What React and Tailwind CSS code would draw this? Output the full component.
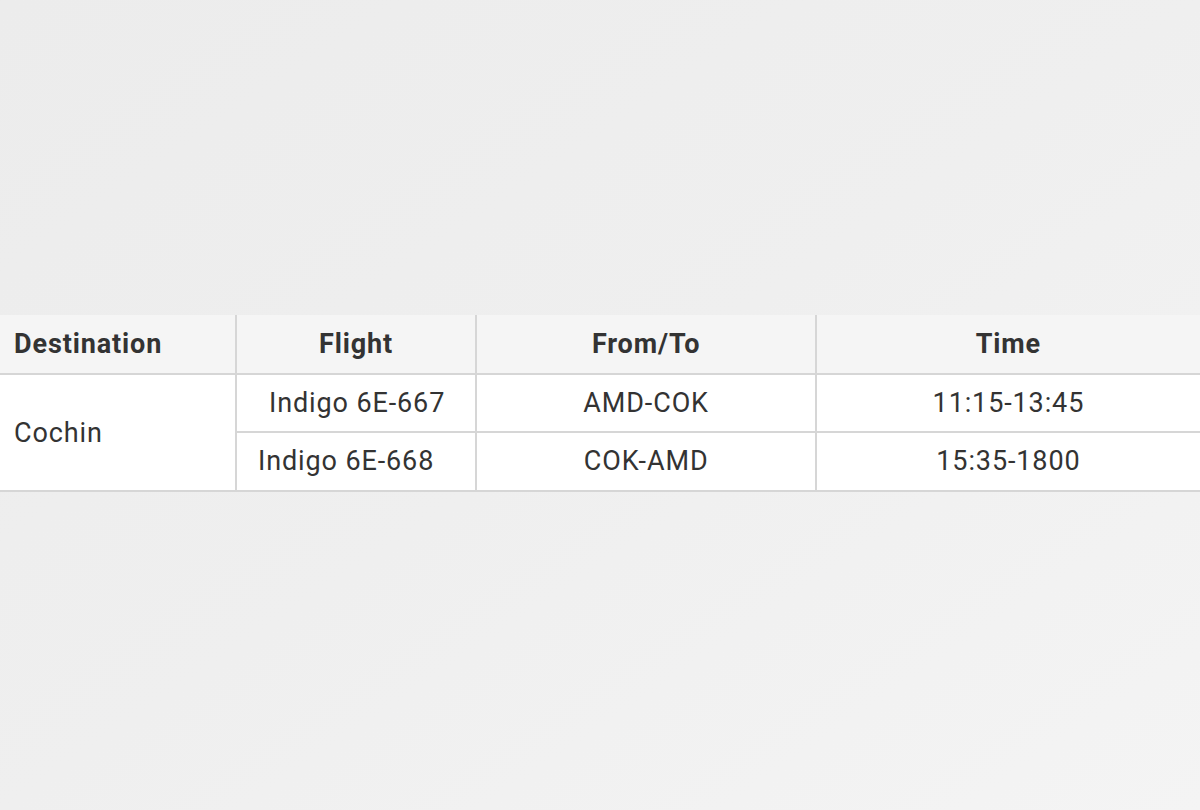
export default function App() {
  const cell = "border-2 border-[#d6d6d6] text-[27px] text-[#333333] leading-none";
  return (
    <div
      className="w-[1200px] h-[810px] overflow-hidden bg-gradient-to-br from-[#ececec] via-[#efefef] to-[#f4f4f4] pt-[315px]"
      style={{ fontFamily: "Roboto, 'Liberation Sans', sans-serif" }}
    >
      <table className="w-[1212px] -ml-[2px] border-collapse tracking-[0.055em]">
        <colgroup>
          <col className="w-[237px]" />
          <col className="w-[241px]" />
          <col className="w-[340px]" />
          <col className="w-[394px]" />
        </colgroup>
        <thead>
          <tr className="bg-[#f5f5f5] h-[59px]">
            <th className={`${cell} border-t-0 font-bold text-left pl-[14px]`}>Destination</th>
            <th className={`${cell} border-t-0 font-bold text-center`}>Flight</th>
            <th className={`${cell} border-t-0 font-bold text-center`}>From/To</th>
            <th className={`${cell} border-t-0 font-bold text-center pr-[8px]`}>Time</th>
          </tr>
        </thead>
        <tbody className="bg-white">
          <tr className="h-[58px]">
            <td rowSpan={2} className={`${cell} text-left pl-[14px] pt-[2px]`}>Cochin</td>
            <td className={`${cell} text-center pl-[2px]`}>Indigo 6E-667</td>
            <td className={`${cell} text-center`}>AMD-COK</td>
            <td className={`${cell} text-center pr-[8px]`}>11:15-13:45</td>
          </tr>
          <tr className="h-[59px]">
            <td className={`${cell} text-center pr-[20px]`}>Indigo 6E-668</td>
            <td className={`${cell} text-center`}>COK-AMD</td>
            <td className={`${cell} text-center pr-[8px]`}>15:35-1800</td>
          </tr>
        </tbody>
      </table>
    </div>
  );
}
